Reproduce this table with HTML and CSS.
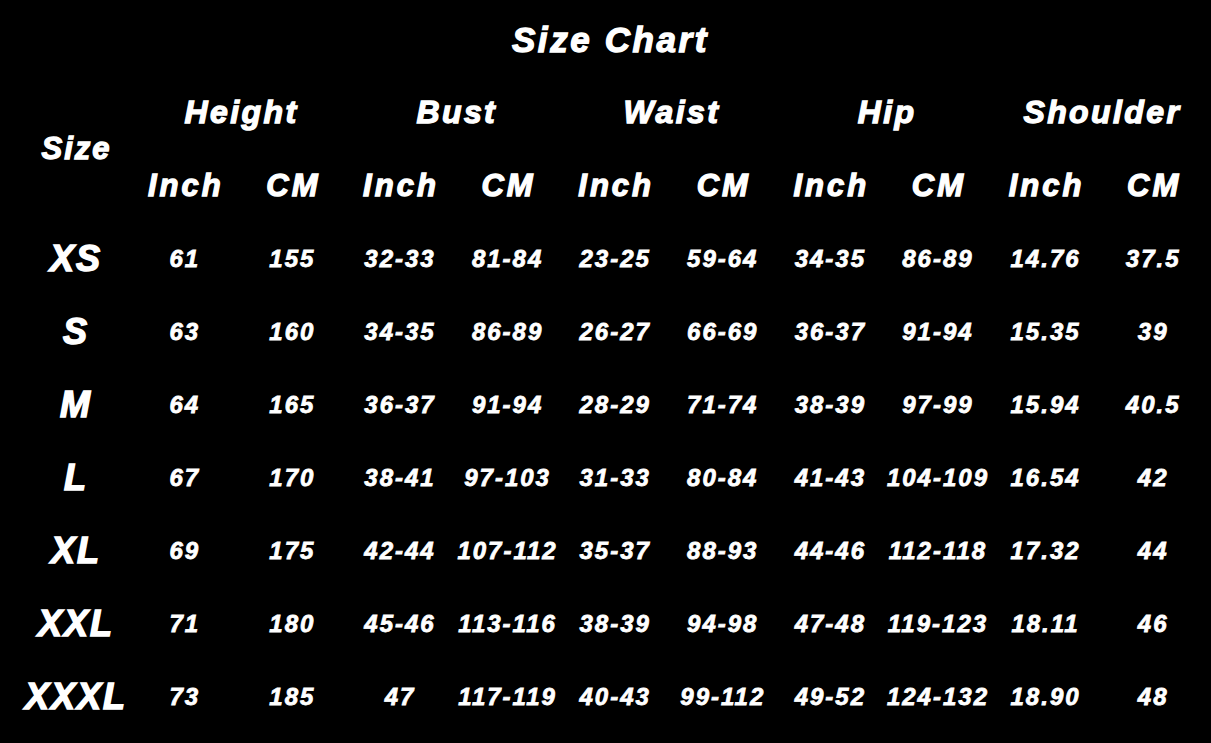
FILE: index.html
```html
<!DOCTYPE html>
<html lang="en">
<head>
<meta charset="utf-8">
<title>Size Chart</title>
<link rel="stylesheet" href="styles.css">
</head>
<body>
<div class="chart">
  <h1 class="title">Size Chart</h1>
  <div class="grid">
    <div class="cell size-head">Size</div>
    <div class="cell group">Height</div>
    <div class="cell group">Bust</div>
    <div class="cell group">Waist</div>
    <div class="cell group">Hip</div>
    <div class="cell group">Shoulder</div>

    <div class="cell unit">Inch</div><div class="cell unit">CM</div>
    <div class="cell unit">Inch</div><div class="cell unit">CM</div>
    <div class="cell unit">Inch</div><div class="cell unit">CM</div>
    <div class="cell unit">Inch</div><div class="cell unit">CM</div>
    <div class="cell unit">Inch</div><div class="cell unit">CM</div>

    <div class="cell label">XS</div>
    <div class="cell num">61</div><div class="cell num">155</div><div class="cell num">32-33</div><div class="cell num">81-84</div><div class="cell num">23-25</div><div class="cell num">59-64</div><div class="cell num">34-35</div><div class="cell num">86-89</div><div class="cell num">14.76</div><div class="cell num">37.5</div>

    <div class="cell label">S</div>
    <div class="cell num">63</div><div class="cell num">160</div><div class="cell num">34-35</div><div class="cell num">86-89</div><div class="cell num">26-27</div><div class="cell num">66-69</div><div class="cell num">36-37</div><div class="cell num">91-94</div><div class="cell num">15.35</div><div class="cell num">39</div>

    <div class="cell label">M</div>
    <div class="cell num">64</div><div class="cell num">165</div><div class="cell num">36-37</div><div class="cell num">91-94</div><div class="cell num">28-29</div><div class="cell num">71-74</div><div class="cell num">38-39</div><div class="cell num">97-99</div><div class="cell num">15.94</div><div class="cell num">40.5</div>

    <div class="cell label">L</div>
    <div class="cell num">67</div><div class="cell num">170</div><div class="cell num">38-41</div><div class="cell num">97-103</div><div class="cell num">31-33</div><div class="cell num">80-84</div><div class="cell num">41-43</div><div class="cell num">104-109</div><div class="cell num">16.54</div><div class="cell num">42</div>

    <div class="cell label">XL</div>
    <div class="cell num">69</div><div class="cell num">175</div><div class="cell num">42-44</div><div class="cell num">107-112</div><div class="cell num">35-37</div><div class="cell num">88-93</div><div class="cell num">44-46</div><div class="cell num">112-118</div><div class="cell num">17.32</div><div class="cell num">44</div>

    <div class="cell label">XXL</div>
    <div class="cell num">71</div><div class="cell num">180</div><div class="cell num">45-46</div><div class="cell num">113-116</div><div class="cell num">38-39</div><div class="cell num">94-98</div><div class="cell num">47-48</div><div class="cell num">119-123</div><div class="cell num">18.11</div><div class="cell num">46</div>

    <div class="cell label">XXXL</div>
    <div class="cell num">73</div><div class="cell num">185</div><div class="cell num">47</div><div class="cell num">117-119</div><div class="cell num">40-43</div><div class="cell num">99-112</div><div class="cell num">49-52</div><div class="cell num">124-132</div><div class="cell num">18.90</div><div class="cell num">48</div>
  </div>
</div>
</body>
</html>
```
FILE: styles.css
```css
html, body {
  margin: 0;
  padding: 0;
  background: #000;
}

body {
  width: 1211px;
  height: 743px;
  overflow: hidden;
  color: #fff;
  font-family: "Liberation Sans", Arial, sans-serif;
  font-weight: bold;
  font-style: italic;
}

.chart {
  display: flex;
  flex-direction: column;
}

.title {
  margin: 0;
  height: 76px;
  padding: 4px 0 0 10px;
  box-sizing: border-box;
  display: flex;
  align-items: center;
  justify-content: center;
  font-size: 35px;
  letter-spacing: 2.6px;
  -webkit-text-stroke: 1.3px #fff;
  font-weight: bold;
}

.grid {
  display: grid;
  grid-template-columns: 110px repeat(10, 107.6px);
  grid-auto-rows: 73px;
  padding-left: 20px;
}

.cell {
  display: flex;
  align-items: center;
  justify-content: center;
  white-space: nowrap;
}

.size-head {
  grid-row: span 2;
  font-size: 31px;
  letter-spacing: 2px;
  padding-left: 3px;
  -webkit-text-stroke: 1.3px #fff;
}

.group {
  grid-column: span 2;
  font-size: 32px;
  letter-spacing: 2.4px;
  padding-left: 8px;
  -webkit-text-stroke: 1.3px #fff;
}

.unit {
  font-size: 31px;
  letter-spacing: 3px;
  padding-left: 4px;
  -webkit-text-stroke: 1.3px #fff;
}

.label {
  font-size: 36px;
  letter-spacing: 2px;
  padding-left: 2px;
  -webkit-text-stroke: 1.5px #fff;
}

.num {
  font-size: 24px;
  letter-spacing: 2px;
  padding-left: 2px;
  -webkit-text-stroke: 0.8px #fff;
}
```
